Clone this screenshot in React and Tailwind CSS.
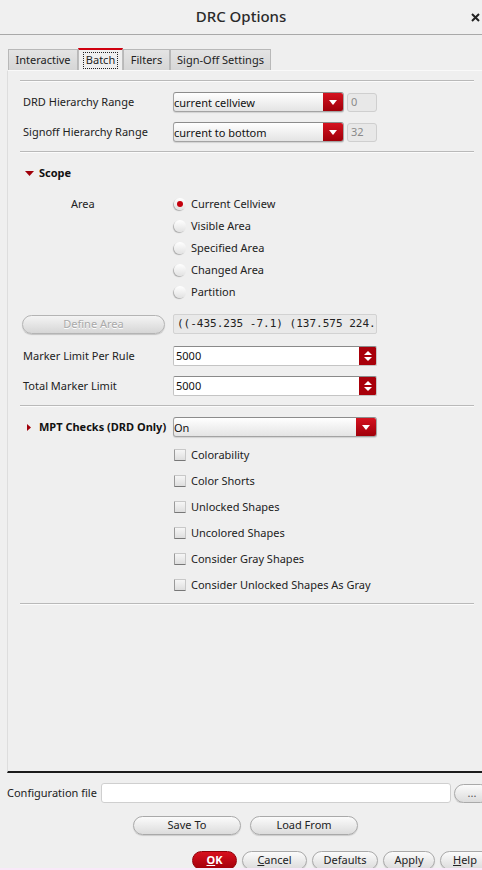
import React from "react";

const FONT = { fontFamily: '"Noto Sans", "Open Sans", sans-serif' };

function Combo({ value, width = "w-[171px]" }) {
  return (
    <div className={`flex h-[20px] ${width} shrink-0 rounded-[3px] border border-[#a3a3a3] border-t-[#8c8c8c] bg-linear-to-b from-white to-[#e4e4e4] shadow-[0_1px_1px_rgba(0,0,0,0.12)] overflow-hidden`}>
      <div className="flex-1 flex items-center text-[11px] text-[#111] leading-none">{value}</div>
      <div className="w-[20px] bg-linear-to-b from-[#d5121f] to-[#a00009] flex items-center justify-center">
        <svg width="8" height="5" viewBox="0 0 8 5"><path d="M0 0h8L4 5z" fill="#fff" /></svg>
      </div>
    </div>
  );
}

function NumField({ value }) {
  return (
    <div className="ml-[3px] w-[30px] h-[19px] rounded-[3px] border border-[#cfcfcf] bg-[#e8e8e8] flex items-center pl-[3px] text-[11px] text-[#8a8a8a]">
      {value}
    </div>
  );
}

function Spin({ value }) {
  return (
    <div className="flex h-[20px] w-[204px] rounded-[2px] border border-[#c4c4c4] border-t-[#8a8a8a] bg-white overflow-hidden">
      <div className="flex-1 pl-[2px] flex items-center text-[11px] text-[#111]">{value}</div>
      <div className="w-[17px] bg-[#a8000a] flex flex-col items-center justify-center gap-[2px]">
        <svg width="8" height="4" viewBox="0 0 8 4"><path d="M0 4h8L4 0z" fill="#fff" /></svg>
        <svg width="8" height="4" viewBox="0 0 8 4"><path d="M0 0h8L4 4z" fill="#fff" /></svg>
      </div>
    </div>
  );
}

function Radio({ checked, label }) {
  return (
    <div className="h-[22px] flex items-center">
      <div className="w-[12px] h-[12px] rounded-full bg-linear-to-b from-[#ffffff] to-[#e2e2e2] shadow-[-1px_1px_1px_rgba(0,0,0,0.28)] flex items-center justify-center">
        {checked && <div className="w-[6px] h-[6px] rounded-full bg-[#c4000d]" />}
      </div>
      <span className="ml-[5px] text-[11px] text-[#222]">{label}</span>
    </div>
  );
}

function Check({ label }) {
  return (
    <div className="h-[26px] flex items-center">
      <div className="w-[12px] h-[12px] rounded-[1px] bg-linear-to-b from-[#f6f6f6] to-[#dedede] border border-[#c8c8c8] border-b-[#777] border-l-[#999]" />
      <span className="ml-[5px] text-[11px] text-[#222]">{label}</span>
    </div>
  );
}

function Sep() {
  return <div className="h-[2px] border-t border-[#b9b9b9] border-b border-b-[#fbfbfb]" />;
}

function Tab({ children, w, active }) {
  if (active) {
    return (
      <div className={`${w} h-[22px] bg-[#efefef] border-t-2 border-t-[#d0000f] border-x border-x-[#bdbdbd] flex items-center justify-center`}>
        <span className="border border-dotted border-[#222] px-[2px] h-[17px] flex items-center">{children}</span>
      </div>
    );
  }
  return (
    <div className={`${w} h-[21px] bg-linear-to-b from-[#e4e4e4] to-[#d6d6d6] border border-[#b8b8b8] border-b-0 flex items-center justify-center`}>
      {children}
    </div>
  );
}

function Pill({ children, className = "" }) {
  return (
    <div className={`h-[19px] shrink-0 rounded-full border border-[#a9a9a9] bg-linear-to-b from-[#fbfbfb] to-[#dcdcdc] shadow-[0_1px_1px_rgba(0,0,0,0.15)] flex items-center justify-center text-[11px] text-[#222] ${className}`}>
      {children}
    </div>
  );
}

export default function App() {
  const radios = ["Current Cellview", "Visible Area", "Specified Area", "Changed Area", "Partition"];
  const checks = ["Colorability", "Color Shorts", "Unlocked Shapes", "Uncolored Shapes", "Consider Gray Shapes", "Consider Unlocked Shapes As Gray"];

  return (
    <div className="w-[482px] h-[870px] bg-[#efefef] flex flex-col overflow-hidden text-[11px] text-[#222]" style={FONT}>
      {/* title bar */}
      <div className="h-[35px] shrink-0 relative flex items-center justify-center border-b border-[#a9a9a9] bg-[#f0f0f0]">
        <span className="text-[15px] text-[#2a2a2a] font-medium -mt-[1px]">DRC Options</span>
        <svg className="absolute right-[2px] top-[13px]" width="9" height="9" viewBox="0 0 9 9">
          <path d="M1 1L8 8M8 1L1 8" stroke="#222" strokeWidth="2" />
        </svg>
      </div>

      {/* tabs */}
      <div className="mt-[13px] ml-[8px] flex items-end h-[22px] shrink-0">
        <Tab w="w-[70px]">Interactive</Tab>
        <Tab w="w-[45px]" active>Batch</Tab>
        <Tab w="w-[47px]">Filters</Tab>
        <Tab w="w-[101px]">Sign-Off Settings</Tab>
      </div>

      {/* panel */}
      <div className="ml-[7px] flex-1 border-l border-[#dddddd] border-t border-t-[#f9f9f9] border-b-2 border-b-[#1b1b1b] flex flex-col">
        <div className="ml-[12px] w-[454px] pt-[9px] flex flex-col">
          <Sep />
          <div className="mt-[10px] h-[20px] flex items-center">
            <span className="w-[153px] pl-[3px]">DRD Hierarchy Range</span>
            <Combo value="current cellview" />
            <NumField value="0" />
          </div>
          <div className="mt-[10px] h-[20px] flex items-center">
            <span className="w-[153px] pl-[3px]">Signoff Hierarchy Range</span>
            <Combo value="current to bottom" />
            <NumField value="32" />
          </div>
          <div className="mt-[9px]"><Sep /></div>

          <div className="mt-[10px] h-[20px] flex items-center">
            <svg className="ml-[5px]" width="9" height="5" viewBox="0 0 9 5"><path d="M0 0h9L4.5 5z" fill="#a0000a" /></svg>
            <span className="ml-[5px] font-bold text-[#111]">Scope</span>
          </div>

          <div className="mt-[10px] flex">
            <span className="w-[154px] pl-[51px] h-[22px] flex items-center">Area</span>
            <div className="flex flex-col">
              {radios.map((r, i) => (
                <Radio key={r} label={r} checked={i === 0} />
              ))}
            </div>
          </div>

          <div className="mt-[11px] h-[20px] flex items-center">
            <div className="ml-[2px] w-[143px] h-[19px] rounded-full border border-[#b4b4b4] bg-linear-to-b from-[#f4f4f4] to-[#d6d6d6] shadow-[0_1px_1px_rgba(0,0,0,0.18)] flex items-center justify-center text-[#a9a9a9] [text-shadow:0_1px_0_#fff]">
              Define Area
            </div>
            <div className="ml-[8px] w-[204px] h-[20px] rounded-[2px] border border-[#d2d2d2] bg-[#e9e9e9] flex items-center pl-[3px] overflow-hidden whitespace-nowrap text-[11px] text-[#222]" style={{ fontFamily: '"DejaVu Sans Mono", monospace' }}>
              ((-435.235 -7.1) (137.575 224.
            </div>
          </div>

          <div className="mt-[12px] h-[20px] flex items-center">
            <span className="w-[153px] pl-[3px]">Marker Limit Per Rule</span>
            <Spin value="5000" />
          </div>
          <div className="mt-[10px] h-[20px] flex items-center">
            <span className="w-[153px] pl-[3px]">Total Marker Limit</span>
            <Spin value="5000" />
          </div>
          <div className="mt-[9px]"><Sep /></div>

          <div className="mt-[10px] h-[20px] flex items-center">
            <svg className="ml-[7px]" width="4" height="7" viewBox="0 0 4 7"><path d="M0 0v7L4 3.5z" fill="#a0000a" /></svg>
            <span className="ml-[8px] w-[134px] font-bold text-[#111]">MPT Checks (DRD Only)</span>
            <Combo value="On" width="w-[204px]" />
          </div>

          <div className="mt-[5px] ml-[154px] flex flex-col">
            {checks.map((c) => (
              <Check key={c} label={c} />
            ))}
          </div>
          <div className="mt-[5px]"><Sep /></div>
        </div>
      </div>

      {/* configuration file */}
      <div className="mt-[10px] h-[20px] flex items-center shrink-0 overflow-hidden">
        <span className="ml-[7px] w-[94px] shrink-0 whitespace-nowrap">Configuration file</span>
        <div className="w-[350px] h-[20px] shrink-0 rounded-[3px] border border-[#cfcfcf] bg-white" />
        <Pill className="ml-[3px] w-[36px] text-[9px] text-[#555]">...</Pill>
      </div>

      <div className="mt-[13px] h-[19px] flex shrink-0">
        <Pill className="ml-[133px] w-[108px]">Save To</Pill>
        <Pill className="ml-[9px] w-[108px]">Load From</Pill>
      </div>

      <div className="mt-[16px] h-[17px] flex items-start shrink-0 overflow-hidden">
        <div className="ml-[192px] w-[45px] h-[19px] shrink-0 rounded-full bg-linear-to-b from-[#d8101d] to-[#a3000a] border border-[#8f0008] flex items-center justify-center text-white font-bold text-[11px]">
          <span><span className="underline">O</span>K</span>
        </div>
        <Pill className="ml-[5px] w-[65px]"><span><span className="underline">C</span>ancel</span></Pill>
        <Pill className="ml-[5px] w-[66px]">Defaults</Pill>
        <Pill className="ml-[5px] w-[52px]">Apply</Pill>
        <Pill className="ml-[5px] w-[56px] justify-start pl-[12px]"><span><span className="underline">H</span>elp</span></Pill>
      </div>
      <div className="h-[2px] bg-[#f9e9f9] shrink-0" />
    </div>
  );
}
